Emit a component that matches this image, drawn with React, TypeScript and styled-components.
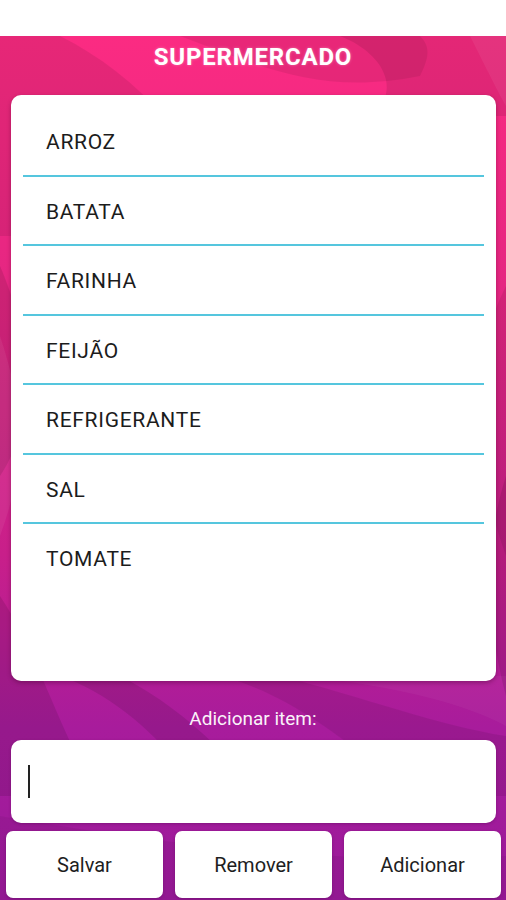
import React from "react";
import styled, { createGlobalStyle } from "styled-components";

const GlobalStyle = createGlobalStyle`
  html, body {
    margin: 0;
    padding: 0;
    background: #ffffff;
    font-family: Roboto, "Noto Sans", Arial, sans-serif;
  }
  * { box-sizing: border-box; }
`;

const items = ["ARROZ", "BATATA", "FARINHA", "FEIJÃO", "REFRIGERANTE", "SAL", "TOMATE"];

const Page = styled.div`
  width: 506px;
  height: 900px;
  display: flex;
  flex-direction: column;
  overflow: hidden;
`;

const StatusBar = styled.div`
  height: 36px;
  background: #ffffff;
  flex-shrink: 0;
`;

const Screen = styled.main`
  position: relative;
  flex: 1;
  display: flex;
  flex-direction: column;
  background: linear-gradient(180deg, #fb2b82 0%, #e42682 30%, #c81f8a 60%, #a81c9c 80%, #9a1a9a 100%);
  overflow: hidden;
`;

const Waves = styled.svg`
  position: absolute;
  inset: 0;
  width: 100%;
  height: 100%;
  pointer-events: none;
`;

const Content = styled.div`
  position: relative;
  display: flex;
  flex-direction: column;
  flex: 1;
`;

const Title = styled.h1`
  margin: 0;
  height: 59px;
  padding-top: 8px;
  text-align: center;
  font-size: 24px;
  line-height: 27px;
  font-weight: 700;
  letter-spacing: 0.8px;
  color: #ffffff;
  text-shadow: 0 0 3px rgba(255, 255, 255, 0.35);
`;

const Card = styled.section`
  margin: 0 10px 0 11px;
  height: 586px;
  background: #ffffff;
  border-radius: 10px;
  padding: 12px 12px 10px;
  box-shadow: 0 2px 4px rgba(60, 0, 40, 0.35);
`;

const List = styled.ul`
  list-style: none;
  margin: 0;
  padding: 0;
`;

const Row = styled.li<{ $last?: boolean }>`
  height: 69.5px;
  display: flex;
  align-items: center;
  padding: 3px 0 0 23px;
  border-bottom: 2px solid ${(p) => (p.$last ? "transparent" : "#55c6de")};
  font-size: 21px;
  letter-spacing: 0.7px;
  color: #1c1c1c;
`;

const Label = styled.div`
  margin-top: 27px;
  text-align: center;
  font-size: 19px;
  line-height: 22px;
  color: #ffffff;
  opacity: 0.95;
`;

const InputBox = styled.div`
  margin: 10px 10px 0 11px;
  height: 83px;
  background: #ffffff;
  border-radius: 10px;
  display: flex;
  align-items: center;
  padding-left: 17px;
  box-shadow: 0 1px 3px rgba(60, 0, 60, 0.3);
`;

const Caret = styled.span`
  width: 2px;
  height: 33px;
  background: #222222;
`;

const ButtonRow = styled.div`
  margin-top: 8px;
  display: grid;
  grid-template-columns: repeat(3, 157px);
  gap: 12px;
  padding-left: 6px;
`;

const Button = styled.button`
  height: 67px;
  border: none;
  border-radius: 7px;
  background: #ffffff;
  font-family: Roboto, "Noto Sans", Arial, sans-serif;
  font-size: 20px;
  color: #1e1e1e;
  box-shadow: 0 1px 3px rgba(60, 0, 60, 0.3);
  padding: 0;
`;

export default function App() {
  return (
    <Page>
      <GlobalStyle />
      <StatusBar />
      <Screen>
        <Waves viewBox="0 0 506 864" preserveAspectRatio="none">
          <path d="M0 0 H60 C140 40 200 110 240 200 L0 200 Z" fill="#000" opacity="0.08" />
          <path d="M180 0 C260 30 320 60 420 40 C430 20 430 10 420 0 Z" fill="#000" opacity="0.07" />
          <path d="M340 0 C390 20 400 60 370 80 L506 80 L506 0 Z" fill="#000" opacity="0.09" />
          <path d="M470 0 C490 40 500 60 506 70 L506 0 Z" fill="#fff" opacity="0.06" />
          <path d="M0 230 C30 300 40 380 0 440 Z" fill="#000" opacity="0.1" />
          <path d="M0 300 C20 360 30 420 0 500 Z" fill="#fff" opacity="0.06" />
          <path d="M506 250 C470 320 470 420 506 520 Z" fill="#000" opacity="0.08" />
          <path d="M506 440 C480 520 490 600 506 660 Z" fill="#000" opacity="0.1" />
          <path d="M0 560 C40 620 60 700 100 760 L0 760 Z" fill="#000" opacity="0.1" />
          <path d="M60 640 C120 660 180 720 200 760 L260 760 C230 720 180 670 120 640 Z" fill="#000" opacity="0.1" />
          <path d="M220 640 C300 660 360 720 420 760 L506 760 L506 700 C440 690 360 660 280 640 Z" fill="#000" opacity="0.08" />
          <path d="M300 640 C400 650 470 670 506 690 L506 640 Z" fill="#fff" opacity="0.04" />
          <path d="M0 780 C120 800 300 830 506 820 L506 864 L0 864 Z" fill="#000" opacity="0.05" />
        </Waves>
        <Content>
          <Title>SUPERMERCADO</Title>
          <Card>
            <List>
              {items.map((item, i) => (
                <Row key={item} $last={i === items.length - 1}>
                  {item}
                </Row>
              ))}
            </List>
          </Card>
          <Label>Adicionar item:</Label>
          <InputBox>
            <Caret />
          </InputBox>
          <ButtonRow>
            <Button>Salvar</Button>
            <Button>Remover</Button>
            <Button>Adicionar</Button>
          </ButtonRow>
        </Content>
      </Screen>
    </Page>
  );
}
